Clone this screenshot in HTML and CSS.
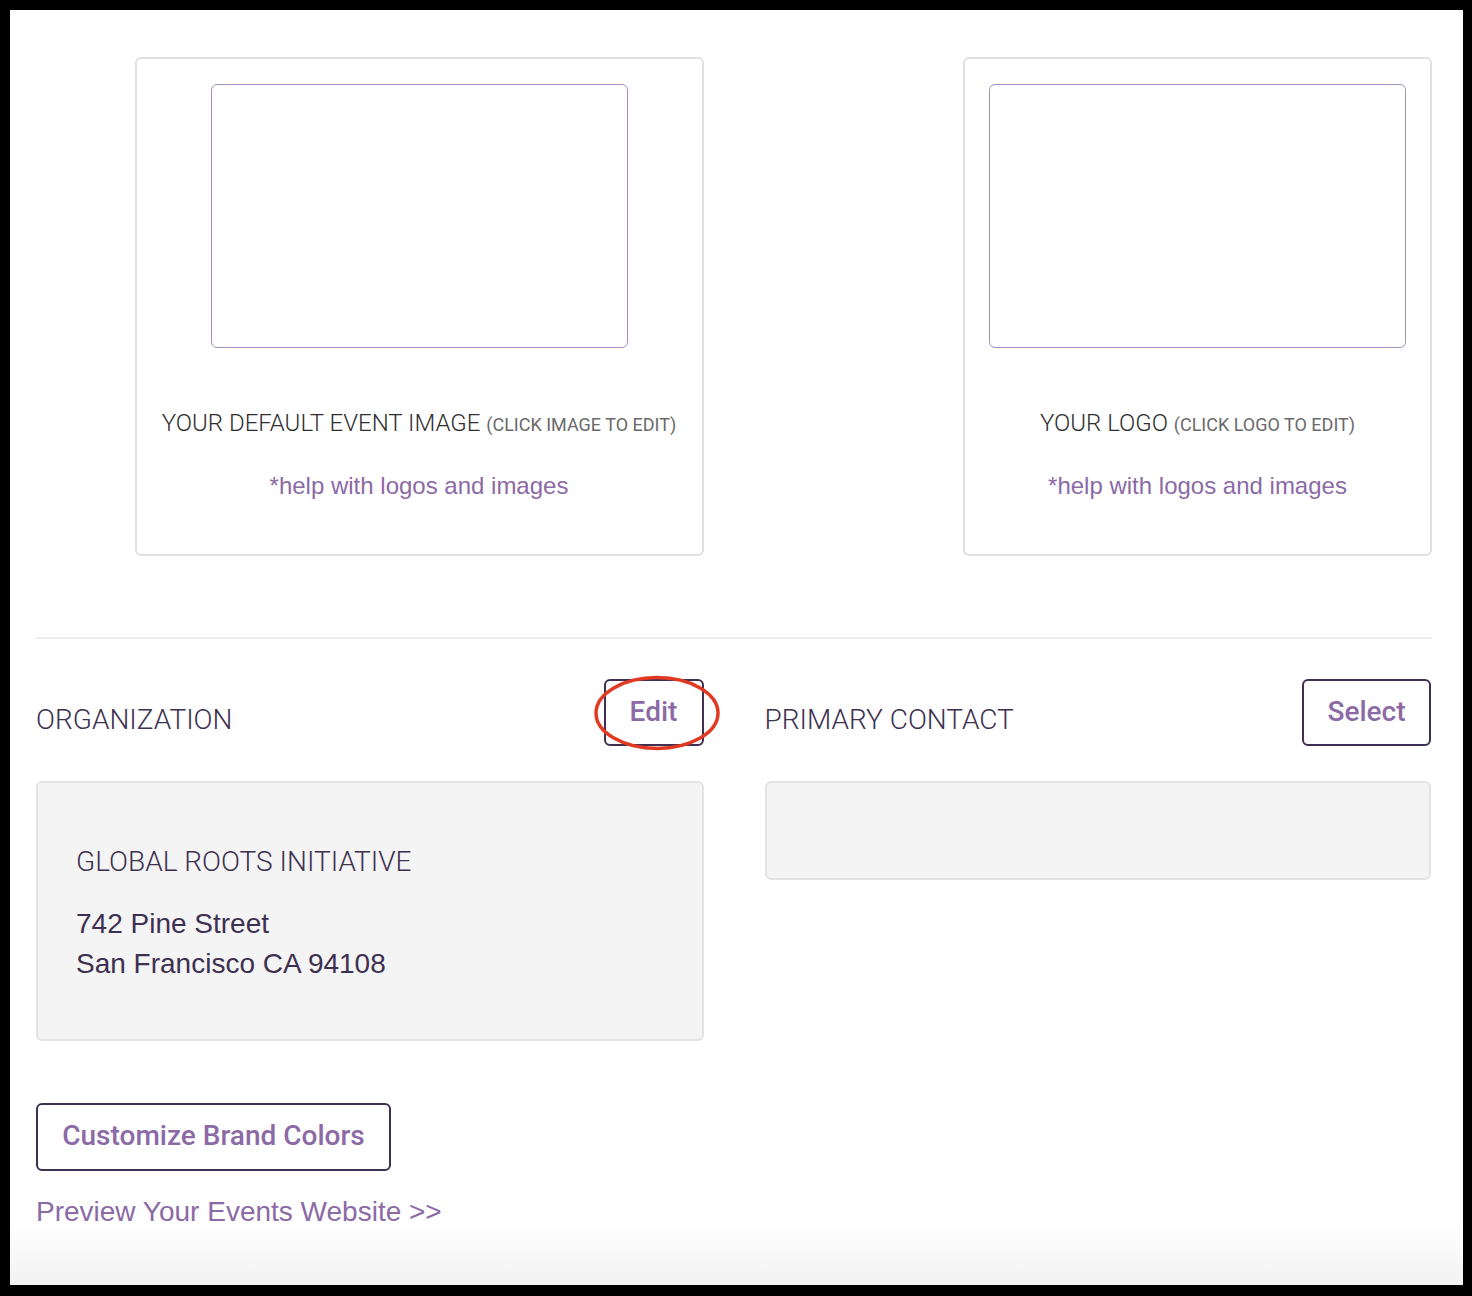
FILE: index.html
```html
<!DOCTYPE html>
<html lang="en">
<head>
<meta charset="utf-8">
<title>Organization Settings</title>
<link rel="stylesheet" href="styles.css">
</head>
<body>
<div class="frame">
  <main class="page">
    <section class="media-row">
      <div class="media-col">
        <div class="media-card media-card--wide">
          <div class="image-slot"></div>
          <p class="media-title">YOUR DEFAULT EVENT IMAGE <span class="media-hint">(CLICK IMAGE TO EDIT)</span></p>
          <a class="help-link" href="#">*help with logos and images</a>
        </div>
      </div>
      <div class="media-col">
        <div class="media-card media-card--narrow">
          <div class="image-slot"></div>
          <p class="media-title">YOUR LOGO <span class="media-hint">(CLICK LOGO TO EDIT)</span></p>
          <a class="help-link" href="#">*help with logos and images</a>
        </div>
      </div>
    </section>

    <hr class="divider">

    <section class="info-row">
      <div class="info-col">
        <div class="info-head">
          <h2 class="info-title">ORGANIZATION</h2>
          <div class="btn-wrap">
            <button class="btn btn-small">Edit</button>
            <svg class="marker" width="128" height="78" viewBox="0 0 128 78" aria-hidden="true">
              <ellipse cx="64" cy="39" rx="61" ry="35.5" fill="none" stroke="#e23a22" stroke-width="3.5"/>
            </svg>
          </div>
        </div>
        <div class="info-box info-box--org">
          <p class="org-name">GLOBAL ROOTS INITIATIVE</p>
          <p class="org-address">742 Pine Street<br>San Francisco CA 94108</p>
        </div>
      </div>
      <div class="info-col">
        <div class="info-head">
          <h2 class="info-title">PRIMARY CONTACT</h2>
          <button class="btn btn-small btn-select">Select</button>
        </div>
        <div class="info-box info-box--contact"></div>
      </div>
    </section>

    <div class="actions">
      <button class="btn btn-wide">Customize Brand Colors</button>
      <a class="preview-link" href="#">Preview Your Events Website &gt;&gt;</a>
    </div>
  </main>
</div>
</body>
</html>
```

FILE: styles.css
```css
* {
  box-sizing: border-box;
}

html,
body {
  margin: 0;
  padding: 0;
  background: #000;
}

.frame {
  width: 1472px;
  height: 1296px;
  padding: 10px 9px 11px 10px;
  background: #000;
}

.page {
  height: 100%;
  background: linear-gradient(to bottom, #fff 0, #fff 1215px, #f2f2f2 1275px);
  padding: 47px 31px 0 26px;
  font-family: Roboto, "Liberation Sans", sans-serif;
  color: #3d3050;
}

/* image / logo cards */
.media-row {
  display: grid;
  grid-template-columns: 1fr 1fr;
  column-gap: 61px;
}

.media-col {
  display: flex;
  justify-content: flex-end;
}

.media-card {
  height: 499px;
  border: 2px solid #e0e0e0;
  border-radius: 6px;
  padding-top: 25px;
  display: flex;
  flex-direction: column;
  align-items: center;
}

.media-card--wide {
  width: 569px;
}

.media-card--narrow {
  width: 469px;
}

.image-slot {
  width: 417px;
  height: 264px;
  border: 1px solid #a48fc0;
  border-radius: 6px;
}

.media-title {
  margin: 60px 0 0;
  font-size: 24px;
  font-weight: 300;
  line-height: 30px;
  color: #2e2e2e;
}

.media-hint {
  font-size: 18px;
  font-weight: 400;
  color: #6a6a6a;
}

.help-link {
  margin-top: 31px;
  font-family: "Liberation Sans", Arial, sans-serif;
  font-size: 24px;
  line-height: 30px;
  color: #8b6aa6;
  text-decoration: none;
}

.divider {
  margin: 81px 0 0;
  border: 0;
  border-top: 2px solid #ececec;
}

/* organization / contact */
.info-row {
  margin-top: 40px;
  display: grid;
  grid-template-columns: 1fr 1fr;
  column-gap: 61px;
}

.info-head {
  display: flex;
  justify-content: space-between;
  align-items: center;
  height: 67px;
}

.info-title {
  margin: 13px 0 0;
  font-size: 28px;
  font-weight: 300;
  color: #3d3050;
}

.btn {
  font-family: Roboto, "Liberation Sans", sans-serif;
  font-weight: 500;
  font-size: 28px;
  color: #8b6aa6;
  background: #fff;
  border: 2px solid #3f2f52;
  border-radius: 6px;
  cursor: pointer;
  padding: 0;
}

.btn-small {
  height: 67px;
  width: 100px;
  padding-bottom: 2px;
}

.btn-select {
  width: 129px;
  margin-right: 1px;
}

.btn-wrap {
  position: relative;
}

.marker {
  position: absolute;
  left: -11px;
  top: -5px;
  pointer-events: none;
}

.info-box {
  margin-top: 35px;
  background: #f4f4f4;
  border: 2px solid #e3e3e3;
  border-radius: 6px;
}

.info-box--org {
  height: 260px;
  padding: 62px 0 0 38px;
}

.info-box--contact {
  height: 99px;
  margin-right: 1px;
}

.org-name {
  margin: 0;
  font-size: 28px;
  font-weight: 300;
  line-height: 34px;
  color: #3d3050;
}

.org-address {
  margin: 25px 0 0;
  font-family: "Liberation Sans", Arial, sans-serif;
  font-size: 28px;
  line-height: 40px;
  color: #3d3050;
}

/* bottom actions */
.actions {
  margin-top: 62px;
  display: flex;
  flex-direction: column;
  align-items: flex-start;
}

.btn-wide {
  width: 355px;
  height: 68px;
  padding-bottom: 3px;
}

.preview-link {
  margin-top: 21px;
  font-family: "Liberation Sans", Arial, sans-serif;
  font-size: 28px;
  line-height: 40px;
  color: #8b6aa6;
  text-decoration: none;
}
```
